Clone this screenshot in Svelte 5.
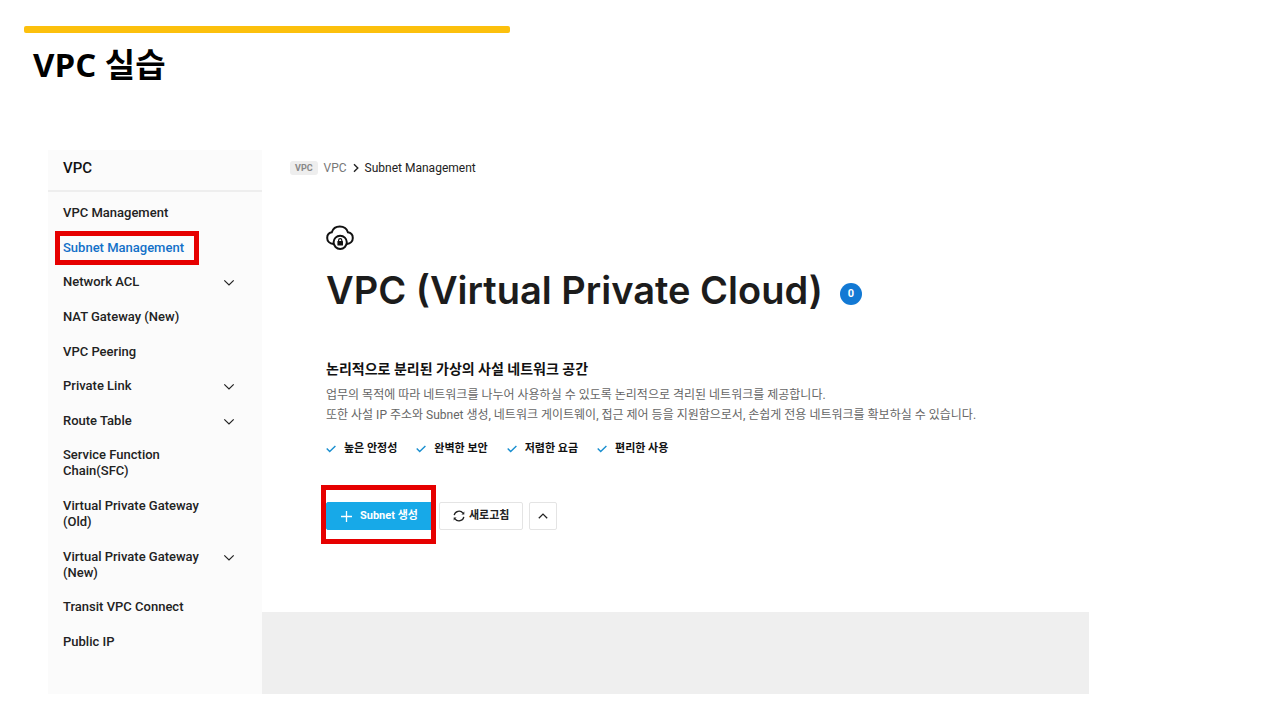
<script lang="ts">
  type MenuItem = { label: string; active?: boolean; children?: boolean };

  const menu: MenuItem[] = [
    { label: "VPC Management" },
    { label: "Subnet Management", active: true },
    { label: "Network ACL", children: true },
    { label: "NAT Gateway (New)" },
    { label: "VPC Peering" },
    { label: "Private Link", children: true },
    { label: "Route Table", children: true },
    { label: "Service Function Chain(SFC)" },
    { label: "Virtual Private Gateway (Old)" },
    { label: "Virtual Private Gateway (New)", children: true },
    { label: "Transit VPC Connect" },
    { label: "Public IP" },
  ];

  const features = ["높은 안정성", "완벽한 보안", "저렴한 요금", "편리한 사용"];
</script>

<div class="slide">
  <header class="slide-head">
    <div class="bar"></div>
    <h1>VPC 실습</h1>
  </header>

  <div class="console">
    <aside class="sidebar">
      <h2>VPC</h2>
      <nav aria-label="VPC">
        <ul>
          {#each menu as item}
            <li>
              <a href="#menu" class:active={item.active}>{item.label}</a>
              {#if item.children}
                <svg class="chevron" width="12" height="8" viewBox="0 0 12 8" aria-hidden="true">
                  <path d="M1.300 1.300 6 6l4.700-4.700" />
                </svg>
              {/if}
            </li>
          {/each}
        </ul>
      </nav>
    </aside>

    <main>
      <div class="content">
        <nav class="crumbs" aria-label="breadcrumb">
          <span class="tag">VPC</span>
          <a href="#vpc">VPC</a>
          <svg width="6" height="10" viewBox="0 0 6 10" aria-hidden="true">
            <path d="m1 1.200 3.800 3.800L1 8.800" />
          </svg>
          <span>Subnet Management</span>
        </nav>

        <section class="intro">
          <svg class="cloud" width="28" height="26" viewBox="0 0 28 26" aria-hidden="true">
            <path d="M7.400 18.900C3.800 18.600 1.200 16.200 1.200 12.900c0-3 2-5.100 4.600-5.600C6.900 3.900 10 1.500 13.800 1.500c3.900 0 7.100 2.400 8.100 5.800 2.900.5 4.900 2.700 4.900 5.600 0 3.200-2.400 5.700-5.900 6" />
            <circle cx="14.200" cy="17.300" r="6.600" />
            <path class="shackle" d="M12.600 16.400v-1.200a1.600 1.600 0 0 1 3.200 0v1.200" />
            <rect x="11.400" y="15.900" width="5.600" height="4.700" rx=".6" />
          </svg>

          <div class="title">
            <h2>VPC (Virtual Private Cloud)</h2>
            <span class="count">0</span>
          </div>

          <h3>논리적으로 분리된 가상의 사설 네트워크 공간</h3>
          <p>
            업무의 목적에 따라 네트워크를 나누어 사용하실 수 있도록 논리적으로 격리된 네트워크를 제공합니다.<br />
            또한 사설 IP 주소와 Subnet 생성, 네트워크 게이트웨이, 접근 제어 등을 지원함으로서, 손쉽게 전용 네트워크를 확보하실 수 있습니다.
          </p>

          <ul class="features">
            {#each features as feature}
              <li>
                <svg width="10" height="8" viewBox="0 0 10 8" aria-hidden="true">
                  <path d="m.7 3.600 3 3L9.400.900" />
                </svg>
                {feature}
              </li>
            {/each}
          </ul>

          <div class="actions">
            <div class="marked">
              <button class="btn primary" type="button">
                <svg width="11" height="11" viewBox="0 0 11 11" aria-hidden="true">
                  <path d="M5.500 0v11M0 5.500h11" />
                </svg>
                Subnet 생성
              </button>
            </div>
            <button class="btn" type="button">
              <svg width="12" height="12" viewBox="0 0 12 12" aria-hidden="true">
                <path d="M1.200 5.200A4.900 4.900 0 0 1 10 3.200M10.800 6.800A4.900 4.900 0 0 1 2 8.800" />
                <path class="tip" d="M11.300 1.600v2.800H8.500zM.7 10.400V7.600h2.800z" />
              </svg>
              새로고침
            </button>
            <button class="btn square" type="button" aria-label="접기">
              <svg width="10" height="6" viewBox="0 0 10 6" aria-hidden="true">
                <path d="M.8 5.300 5 1.100l4.200 4.200" />
              </svg>
            </button>
          </div>
        </section>
      </div>
      <div class="panel"></div>
    </main>
  </div>
</div>

<style>
  :global(body) {
    margin: 0;
    background: #fff;
  }

  .slide {
    box-sizing: border-box;
    padding: 26px 24px;
    color: #222;
    font-family: Roboto, "Noto Sans CJK KR", sans-serif;
  }

  h1, h2, h3, p, ul { margin: 0; padding: 0; }
  ul { list-style: none; }
  a { color: inherit; text-decoration: none; }
  svg { flex: none; fill: none; stroke: currentColor; }

  /* slide heading */
  .slide-head { min-height: 124px; }

  .bar {
    width: 486px;
    max-width: 100%;
    height: 7px;
    border-radius: 2px;
    background: #fcc00d;
  }

  h1 {
    padding: 8px 9px 0;
    color: #000;
    font: 700 33px/48px "Open Sans", "Noto Sans CJK KR", sans-serif;
  }

  /* console */
  .console {
    display: flex;
    max-width: 1041px;
    margin-left: 24px;
  }

  .sidebar {
    flex: none;
    width: 214px;
    background: #fbfbfb;
  }

  .sidebar h2 {
    padding: 0 15px 4px;
    border-bottom: 2px solid #eee;
    color: #111;
    font-size: 15px;
    font-weight: 500;
    line-height: 36px;
  }

  .sidebar ul {
    display: flex;
    flex-direction: column;
    justify-content: space-between;
    min-height: 445px;
    padding: 13px 27px 44px 15px;
  }

  .sidebar li {
    display: flex;
    justify-content: space-between;
    align-items: flex-start;
  }

  .sidebar a {
    max-width: 140px;
    font-size: 13px;
    font-weight: 500;
    line-height: 16px;
  }

  .sidebar a.active {
    position: relative;
    color: #1270c8;
  }

  .sidebar a.active::after {
    content: "";
    position: absolute;
    inset: -9px -15px -9px -8px;
    border: 5px solid #e60000;
  }

  .chevron {
    margin-top: 5px;
    stroke-width: 1.2;
  }

  main {
    flex: 1;
    display: flex;
    flex-direction: column;
    min-width: 0;
  }

  .content {
    flex: 1;
    padding: 9px 28px 67px;
  }

  .panel {
    height: 82px;
    background: #efefef;
  }

  .crumbs {
    display: flex;
    align-items: center;
    gap: 6px;
    color: #222;
    font-size: 12px;
    line-height: 18px;
  }

  .crumbs a { color: #777; }
  .crumbs svg { stroke-width: 1.4; }

  .tag {
    padding: 0 5px;
    border-radius: 3px;
    background: #eee;
    color: #888;
    font-size: 9px;
    font-weight: 700;
    line-height: 14px;
  }

  .intro { padding: 48px 36px 0; }

  .cloud {
    display: block;
    color: #111;
    stroke-width: 2;
    stroke-linecap: round;
  }

  .cloud circle { fill: #fff; }
  .cloud .shackle { stroke-width: 1.2; }
  .cloud rect { fill: #111; stroke: none; }

  .title {
    display: flex;
    align-items: center;
    gap: 17px;
    margin-top: 15px;
  }

  .title h2 {
    color: #1c1c1c;
    font: 600 38px/48px Inter, sans-serif;
  }

  .count {
    width: 22px;
    margin-top: 8px;
    border-radius: 50%;
    background: #1279d4;
    color: #fff;
    font-size: 11px;
    font-weight: 700;
    line-height: 22px;
    text-align: center;
  }

  h3 {
    margin-top: 45px;
    color: #111;
    font-size: 14px;
    font-weight: 700;
    line-height: 20px;
  }

  p {
    margin-top: 6px;
    color: #666;
    font-size: 12px;
    line-height: 20px;
  }

  .features {
    display: flex;
    flex-wrap: wrap;
    gap: 19px;
    margin-top: 15px;
    color: #111;
    font-size: 11px;
    font-weight: 700;
    line-height: 18px;
  }

  .features li {
    display: flex;
    align-items: center;
    gap: 8px;
  }

  .features svg {
    color: #1a8fd0;
    stroke-width: 1.4;
  }

  .actions {
    display: flex;
    align-items: center;
    gap: 6px;
    margin-top: 44px;
  }

  .btn {
    display: flex;
    align-items: center;
    justify-content: center;
    gap: 4px;
    box-sizing: border-box;
    height: 28px;
    padding: 0 13px;
    border: 1px solid #e4e4e4;
    border-radius: 2px;
    background: #fff;
    color: #222;
    font: 700 11px/18px Roboto, "Noto Sans CJK KR", sans-serif;
  }

  .btn svg { stroke-width: 1.3; }
  .btn .tip { fill: currentColor; stroke: none; }

  .primary {
    gap: 8px;
    padding: 0 14px;
    border-color: #17a9e8;
    background: #17a9e8;
    color: #fff;
  }

  .square {
    width: 28px;
    padding: 0;
  }

  .marked { position: relative; }

  .marked::after {
    content: "";
    position: absolute;
    inset: -17px -3px -14px -5px;
    border: 5px solid #e60000;
    pointer-events: none;
  }
</style>
